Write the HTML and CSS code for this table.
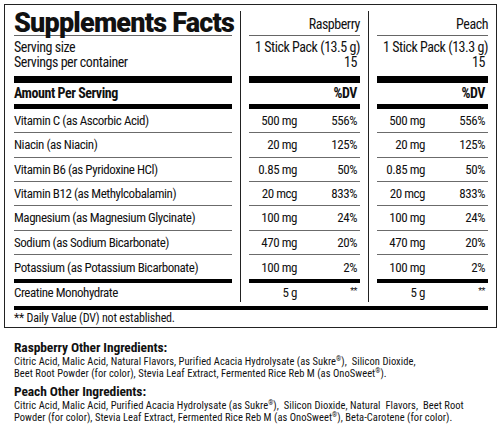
FILE: index.html
```html
<!DOCTYPE html>
<html>
<head>
	<title>Supplements Facts</title>
	<link rel="stylesheet" href="styles.css">
</head>
<body>

	<main class="facts-box">
		<div class="facts-cols">
			<div class="col col-names">
				<div class="row head"><h1 class="title">Supplements Facts</h1></div>
				<div class="row serv1">Serving size</div>
				<div class="row serv2">Servings per container</div>
				<div class="bar bar-top"></div>
				<div class="row amount"><b>Amount Per Serving</b></div>
				<div class="bar bar-mid"></div>
				<div class="row item">Vitamin C (as Ascorbic Acid)</div>
				<div class="row item">Niacin (as Niacin)</div>
				<div class="row item">Vitamin B6 (as Pyridoxine HCl)</div>
				<div class="row item">Vitamin B12 (as Methylcobalamin)</div>
				<div class="row item">Magnesium (as Magnesium Glycinate)</div>
				<div class="row item">Sodium (as Sodium Bicarbonate)</div>
				<div class="row item last">Potassium (as Potassium Bicarbonate)</div>
				<div class="bar bar-low"></div>
				<div class="row extra">Creatine Monohydrate</div>
			</div>

			<div class="col col-flavor">
				<div class="row head flavor-name">Raspberry</div>
				<div class="row serv1 val">1 Stick Pack (13.5 g)</div>
				<div class="row serv2 val pad">15</div>
				<div class="bar bar-top"></div>
				<div class="row amount val pad"><b>%DV</b></div>
				<div class="bar bar-mid"></div>
				<div class="row item"><span class="qty">500 mg</span><span class="dv">556%</span></div>
				<div class="row item"><span class="qty">20 mg</span><span class="dv">125%</span></div>
				<div class="row item"><span class="qty">0.85 mg</span><span class="dv">50%</span></div>
				<div class="row item"><span class="qty">20 mcg</span><span class="dv">833%</span></div>
				<div class="row item"><span class="qty">100 mg</span><span class="dv">24%</span></div>
				<div class="row item"><span class="qty">470 mg</span><span class="dv">20%</span></div>
				<div class="row item last"><span class="qty">100 mg</span><span class="dv">2%</span></div>
				<div class="bar bar-low"></div>
				<div class="row extra"><span class="qty">5 g</span><span class="dv"><sup>**</sup></span></div>
			</div>

			<div class="col col-flavor">
				<div class="row head flavor-name">Peach</div>
				<div class="row serv1 val">1 Stick Pack (13.3 g)</div>
				<div class="row serv2 val pad">15</div>
				<div class="bar bar-top"></div>
				<div class="row amount val pad"><b>%DV</b></div>
				<div class="bar bar-mid"></div>
				<div class="row item"><span class="qty">500 mg</span><span class="dv">556%</span></div>
				<div class="row item"><span class="qty">20 mg</span><span class="dv">125%</span></div>
				<div class="row item"><span class="qty">0.85 mg</span><span class="dv">50%</span></div>
				<div class="row item"><span class="qty">20 mcg</span><span class="dv">833%</span></div>
				<div class="row item"><span class="qty">100 mg</span><span class="dv">24%</span></div>
				<div class="row item"><span class="qty">470 mg</span><span class="dv">20%</span></div>
				<div class="row item last"><span class="qty">100 mg</span><span class="dv">2%</span></div>
				<div class="bar bar-low"></div>
				<div class="row extra"><span class="qty">5 g</span><span class="dv"><sup>**</sup></span></div>
			</div>
		</div>
		<div class="bar bar-end"></div>
		<p class="note">** Daily Value (DV) not established.</p>
	</main>

	<section class="other">
		<h2>Raspberry Other Ingredients:</h2>
		<p>Citric Acid, Malic Acid, Natural Flavors, Purified Acacia Hydrolysate (as Sukre<sup>®</sup>), &nbsp;Silicon Dioxide,<br>
		Beet Root Powder (for color), Stevia Leaf Extract, Fermented Rice Reb M (as OnoSweet<sup>®</sup>).</p>
		<h2 class="second">Peach Other Ingredients:</h2>
		<p>Citric Acid, Malic Acid, Purified Acacia Hydrolysate (as Sukre<sup>®</sup>), &nbsp;Silicon Dioxide, Natural &nbsp;Flavors, &nbsp;Beet Root<br>
		Powder (for color), Stevia Leaf Extract, Fermented Rice Reb M (as OnoSweet<sup>®</sup>), Beta-Carotene (for color).</p>
	</section>

</body>
</html>
```
FILE: styles.css
```css
*{
	margin: 0;
	padding: 0;
	box-sizing: border-box;
}
body{
	font-family: "Roboto Condensed", "DejaVu Sans Condensed", sans-serif;
	color: #111;
	background: #fff;
	font-size: 13px;
	letter-spacing: -0.45px;
}
.facts-box{
	margin: 4px 0 0 4px;
	width: 493px;
	height: 324px;
	border: solid 1px #222;
	padding: 6px 8px 0 9px;
}
.facts-cols{
	display: flex;
}
.col-names{
	width: 218px;
}
.col-flavor{
	width: 120px;
	margin-left: 8px;
	padding-left: 8px;
	border-left: solid 1px #222;
}
.row{
	display: flex;
	align-items: center;
	line-height: 15px;
	white-space: nowrap;
}
.head{
	height: 25px;
	border-bottom: solid 1px #666;
	align-items: flex-end;
	font-size: 14px;
}
.title{
	font-family: Roboto, sans-serif;
	font-weight: 900;
	font-size: 27px;
	letter-spacing: -0.8px;
	line-height: 24px;
	padding-top: 1px;
}
.flavor-name{
	justify-content: flex-end;
	padding-bottom: 3px;
}
.serv1{
	height: 19px;
	align-items: flex-end;
	font-size: 14px;
}
.serv2{
	height: 15px;
	font-size: 14px;
}
.val{
	justify-content: flex-end;
}
.pad{
	padding-right: 3px;
}
.bar{
	background: #000;
}
.bar-top{
	height: 7px;
	margin-top: 6px;
}
.amount{
	height: 21px;
	font-size: 14px;
}
.amount b{
	font-weight: 700;
}
.bar-mid{
	height: 5px;
}
.item{
	height: 24.33px;
	border-bottom: solid 1px #6b6b6b;
}
.item.last{
	border-bottom: 0;
}
.bar-low{
	height: 4px;
}
.extra{
	height: 19px;
}
.qty{
	width: 48px;
	text-align: right;
}
.dv{
	flex: 1;
	text-align: right;
	padding-right: 3px;
}
.dv sup{
	font-size: 9px;
	vertical-align: 4px;
}
.bar-end{
	height: 4px;
	margin-top: 4px;
}
.note{
	font-size: 12px;
	letter-spacing: -0.2px;
	line-height: 15px;
	height: 16px;
	display: flex;
	align-items: center;
}
.other{
	padding: 11px 0 0 14px;
}
.other h2{
	font-size: 13.5px;
	font-weight: 700;
	line-height: 16px;
	letter-spacing: -0.1px;
}
.other h2.second{
	margin-top: 3px;
}
.other p{
	font-size: 10.5px;
	line-height: 12px;
	letter-spacing: 0.05px;
	margin-top: 1px;
	white-space: nowrap;
}
.other sup{
	font-size: 6.5px;
	vertical-align: 4px;
	line-height: 0;
}
```
